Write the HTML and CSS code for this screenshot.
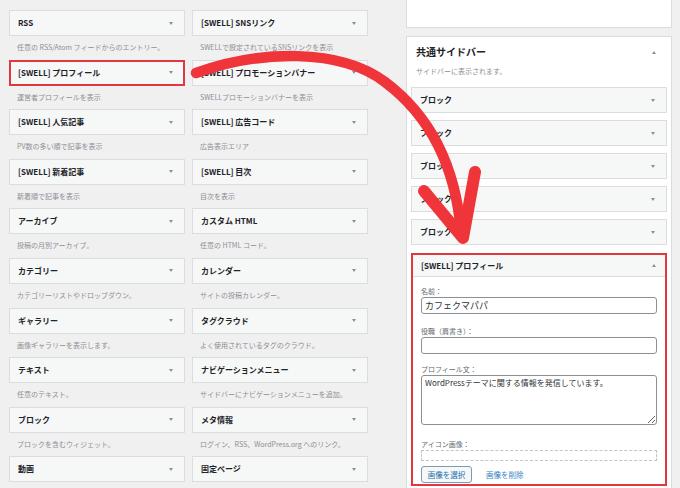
FILE: index.html
```html
<!DOCTYPE html>
<html lang="ja">
<head>
<meta charset="utf-8">
<link rel="stylesheet" href="styles.css">
</head>
<body>
<div class="page">
  <div class="avail">
    <div class="w"><div class="w-top"><span>RSS</span><i class="tri"></i></div><div class="w-desc">任意の RSS/Atom フィードからのエントリー。</div></div>
    <div class="w"><div class="w-top"><span>[SWELL] SNSリンク</span><i class="tri"></i></div><div class="w-desc">SWELLで設定されているSNSリンクを表示</div></div>
    <div class="w"><div class="w-top hl"><span>[SWELL] プロフィール</span><i class="tri"></i></div><div class="w-desc">運営者プロフィールを表示</div></div>
    <div class="w"><div class="w-top"><span>[SWELL] プロモーションバナー</span><i class="tri"></i></div><div class="w-desc">SWELLプロモーションバナーを表示</div></div>
    <div class="w"><div class="w-top"><span>[SWELL] 人気記事</span><i class="tri"></i></div><div class="w-desc">PV数の多い順で記事を表示</div></div>
    <div class="w"><div class="w-top"><span>[SWELL] 広告コード</span><i class="tri"></i></div><div class="w-desc">広告表示エリア</div></div>
    <div class="w"><div class="w-top"><span>[SWELL] 新着記事</span><i class="tri"></i></div><div class="w-desc">新着順で記事を表示</div></div>
    <div class="w"><div class="w-top"><span>[SWELL] 目次</span><i class="tri"></i></div><div class="w-desc">目次を表示</div></div>
    <div class="w"><div class="w-top"><span>アーカイブ</span><i class="tri"></i></div><div class="w-desc">投稿の月別アーカイブ。</div></div>
    <div class="w"><div class="w-top"><span>カスタム HTML</span><i class="tri"></i></div><div class="w-desc">任意の HTML コード。</div></div>
    <div class="w"><div class="w-top"><span>カテゴリー</span><i class="tri"></i></div><div class="w-desc">カテゴリーリストやドロップダウン。</div></div>
    <div class="w"><div class="w-top"><span>カレンダー</span><i class="tri"></i></div><div class="w-desc">サイトの投稿カレンダー。</div></div>
    <div class="w"><div class="w-top"><span>ギャラリー</span><i class="tri"></i></div><div class="w-desc">画像ギャラリーを表示します。</div></div>
    <div class="w"><div class="w-top"><span>タグクラウド</span><i class="tri"></i></div><div class="w-desc">よく使用されているタグのクラウド。</div></div>
    <div class="w"><div class="w-top"><span>テキスト</span><i class="tri"></i></div><div class="w-desc">任意のテキスト。</div></div>
    <div class="w"><div class="w-top"><span>ナビゲーションメニュー</span><i class="tri"></i></div><div class="w-desc">サイドバーにナビゲーションメニューを追加。</div></div>
    <div class="w"><div class="w-top"><span>ブロック</span><i class="tri"></i></div><div class="w-desc">ブロックを含むウィジェット。</div></div>
    <div class="w"><div class="w-top"><span>メタ情報</span><i class="tri"></i></div><div class="w-desc">ログイン、RSS、WordPress.org へのリンク。</div></div>
    <div class="w"><div class="w-top"><span>動画</span><i class="tri"></i></div></div>
    <div class="w"><div class="w-top"><span>固定ページ</span><i class="tri"></i></div></div>
  </div>

  <div class="side">
    <div class="panel-top"></div>
    <div class="panel">
      <div class="panel-head"><h3>共通サイドバー</h3><i class="tri up"></i></div>
      <p class="panel-desc">サイドバーに表示されます。</p>
      <div class="sb-list">
        <div class="sb-w"><span>ブロック</span><i class="tri"></i></div>
        <div class="sb-w"><span>ブロック</span><i class="tri"></i></div>
        <div class="sb-w"><span>ブロック</span><i class="tri"></i></div>
        <div class="sb-w"><span>ブロック</span><i class="tri"></i></div>
        <div class="sb-w last"><span>ブロック</span><i class="tri"></i></div>
        <div class="pf">
          <div class="pf-head"><span>[SWELL] プロフィール</span><i class="tri up"></i></div>
          <div class="pf-body">
            <div class="lbl">名前：</div>
            <input class="inp" type="text" value="カフェクマパパ">
            <div class="lbl l2">役職（肩書き）：</div>
            <input class="inp" type="text" value="">
            <div class="lbl l3">プロフィール文：</div>
            <textarea class="ta">WordPressテーマに関する情報を発信しています。</textarea>
            <div class="lbl l4">アイコン画像：</div>
            <div class="dash"></div>
            <div class="btns">
              <span class="btn">画像を選択</span>
              <span class="lnk">画像を削除</span>
            </div>
          </div>
        </div>
      </div>
    </div>
  </div>
</div>

<svg class="arrow" width="680" height="488" viewBox="0 0 680 488">
  <path d="M196,73 C260,50 340,48 385,82 C425,112 455,160 461,232" fill="none" stroke="#f0353a" stroke-width="10.5" stroke-linecap="round"/>
  <path d="M424,191 L463,238 L475,172" fill="none" stroke="#f0353a" stroke-width="12" stroke-linecap="round" stroke-linejoin="round"/>
</svg>
</body>
</html>
```

FILE: styles.css
```css
html, body {
  margin: 0;
  padding: 0;
}
body {
  width: 680px;
  height: 488px;
  overflow: hidden;
  position: relative;
  background: #f0f0f1;
  color: #1d2327;
  font-family: "Noto Sans CJK JP", "Open Sans", sans-serif;
}
.page {
  display: flex;
  align-items: flex-start;
  height: 488px;
}
.avail {
  display: grid;
  grid-template-columns: 176px 176px;
  grid-auto-rows: 49.6px;
  column-gap: 7px;
  padding: 10px 0 0 9px;
}
.w-top {
  box-sizing: border-box;
  height: 26px;
  border: 1px solid #dcdcde;
  background: #f6f7f7;
  display: flex;
  align-items: center;
  justify-content: space-between;
  padding: 0 11px 0 8px;
  font-size: 8px;
  font-weight: 700;
  line-height: 10px;
  white-space: nowrap;
}
.w-top.hl {
  border: 2px solid #e2383d;
  padding: 0 10px 0 7px;
}
.w-desc {
  font-size: 7px;
  line-height: 10px;
  color: #8c8f94;
  padding: 6px 0 0 8px;
  white-space: nowrap;
}
.tri {
  display: block;
  width: 0;
  height: 0;
  border-left: 2.5px solid transparent;
  border-right: 2.5px solid transparent;
  border-top: 3px solid #8c8f94;
}
.tri.up {
  border-top: 0;
  border-bottom: 3px solid #8c8f94;
}
.side {
  margin-left: 38px;
  width: 266px;
}
.panel-top {
  box-sizing: border-box;
  height: 28px;
  background: #fff;
  border: 1px solid #dcdcde;
  border-top: 0;
}
.panel {
  box-sizing: border-box;
  margin-top: 8px;
  height: 460px;
  background: #fff;
  border: 1px solid #dcdcde;
  border-bottom: 0;
  padding: 0 4px;
}
.panel-head {
  display: flex;
  align-items: center;
  justify-content: space-between;
  padding: 8px 11px 0 5px;
}
.panel-head h3 {
  margin: 0;
  font-size: 10px;
  line-height: 14px;
  font-weight: 700;
}
.panel-desc {
  margin: 7px 0 0 5px;
  font-size: 7px;
  line-height: 10px;
  color: #8c8f94;
}
.sb-list {
  margin-top: 11px;
}
.sb-w {
  box-sizing: border-box;
  height: 26px;
  margin-bottom: 7px;
  border: 1px solid #dcdcde;
  background: #f6f7f7;
  display: flex;
  align-items: center;
  justify-content: space-between;
  padding: 0 11px 0 8px;
  font-size: 8px;
  font-weight: 700;
  line-height: 10px;
}
.sb-w.last {
  margin-bottom: 8px;
}
.pf {
  border: 2px solid #e2383d;
  background: #fff;
}
.pf-head {
  box-sizing: border-box;
  height: 22px;
  background: #f6f7f7;
  border-bottom: 1px solid #dcdcde;
  display: flex;
  align-items: center;
  justify-content: space-between;
  padding: 0 9px 0 8px;
  font-size: 8px;
  font-weight: 700;
  line-height: 10px;
}
.pf-body {
  padding: 9px 8px 1px 8px;
}
.lbl {
  font-size: 7px;
  line-height: 10px;
  color: #646970;
  margin-bottom: 1px;
}
.lbl.l2 { margin-top: 12px; }
.lbl.l3 { margin-top: 10px; }
.lbl.l4 { margin-top: 14px; }
.inp {
  display: block;
  box-sizing: border-box;
  width: 100%;
  height: 17px;
  margin: 0;
  padding: 0 3px;
  border: 1px solid #8c8f94;
  border-radius: 3px;
  background: #fff;
  font-family: inherit;
  font-size: 9px;
  color: #2c3338;
  outline: none;
}
.ta {
  display: block;
  box-sizing: border-box;
  width: 100%;
  height: 50px;
  margin: 0;
  padding: 2px 3px;
  border: 1px solid #8c8f94;
  border-radius: 3px;
  background: #fff;
  font-family: inherit;
  font-size: 8px;
  line-height: 10px;
  color: #2c3338;
  resize: vertical;
  outline: none;
}
.dash {
  box-sizing: border-box;
  height: 11px;
  margin-top: 1px;
  border: 1px dashed #c3c4c7;
}
.btns {
  display: flex;
  align-items: center;
  margin-top: 5px;
  height: 17px;
}
.btn {
  box-sizing: border-box;
  width: 51px;
  height: 17px;
  display: flex;
  align-items: center;
  justify-content: center;
  border: 1px solid #7e9bb5;
  border-radius: 3px;
  background: #f6f7f7;
  color: #2271b1;
  font-size: 7.5px;
  line-height: 10px;
}
.lnk {
  margin-left: 14px;
  color: #3582c4;
  font-size: 7.5px;
  line-height: 10px;
}
.arrow {
  position: absolute;
  left: 0;
  top: 0;
  pointer-events: none;
}
```
